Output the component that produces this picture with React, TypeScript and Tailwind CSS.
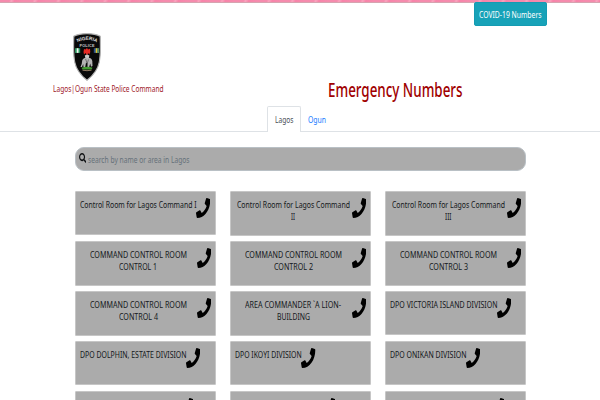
import React, { useLayoutEffect, useRef } from "react";
import { FaPhone, FaSearch } from "react-icons/fa";

/* A single line of text condensed or stretched to the given width. */
function FitText({ text, width, className = "" }: { text: string; width: number; className?: string }) {
  const ref = useRef<HTMLSpanElement>(null);
  useLayoutEffect(() => {
    const el = ref.current;
    if (!el) return;
    const fit = () => {
      el.style.transform = "none";
      el.style.transform = `scaleX(${width / el.getBoundingClientRect().width})`;
    };
    fit();
    document.fonts?.ready.then(fit);
  }, [text, width]);
  return (
    <span className={`block shrink-0 ${className}`} style={{ width }}>
      <span ref={ref} className="inline-block origin-left whitespace-nowrap">
        {text}
      </span>
    </span>
  );
}

type Line = [string, number];
type Entry = { lines: Line[] };

const entries: Entry[] = [
  { lines: [["Control Room for Lagos Command I", 116.5]] },
  { lines: [["Control Room for Lagos Command", 113], ["II", 4]] },
  { lines: [["Control Room for Lagos Command", 113], ["III", 6.5]] },
  { lines: [["COMMAND CONTROL ROOM", 97], ["CONTROL 1", 38]] },
  { lines: [["COMMAND CONTROL ROOM", 97], ["CONTROL 2", 39]] },
  { lines: [["COMMAND CONTROL ROOM", 97], ["CONTROL 3", 39]] },
  { lines: [["COMMAND CONTROL ROOM", 97], ["CONTROL 4", 39]] },
  { lines: [["AREA COMMANDER `A LION-", 96], ["BUILDING", 33]] },
  { lines: [["DPO VICTORIA ISLAND DIVISION", 107.5]] },
  { lines: [["DPO DOLPHIN, ESTATE DIVISION", 106.5]] },
  { lines: [["DPO IKOYI DIVISION", 66.7]] },
  { lines: [["DPO ONIKAN DIVISION", 76.5]] },
  { lines: [["", 99.5]] },
  { lines: [["", 86]] },
  { lines: [["", 100.5]] },
];

function Card({ entry }: { entry: Entry }) {
  const wrapped = entry.lines.length > 1;
  return (
    <div
      className={`flex items-start rounded-[1px] border border-[#c6c6c6] bg-[#ababab] pt-[6px] pl-[4px] ${
        wrapped ? "h-[44.5px]" : "h-[43.5px]"
      }`}
    >
      <div className={`flex flex-col items-center pt-px text-[9.200px] leading-[12px] text-[#14181b] ${wrapped ? "w-[117.5px]" : ""}`}>
        {entry.lines.map(([text, width], i) => (
          <FitText key={i} text={text} width={width} className="h-[12px]" />
        ))}
      </div>
      <FaPhone preserveAspectRatio="none" className="h-[20px] w-[14.3px] shrink-0 text-black" />
    </div>
  );
}

function Crest() {
  return (
    <svg viewBox="0 0 28 48" className="h-[48px] w-[28px]">
      <path d="M14 .6C9 .6 4 1.500.8 3.300.3 14 .4 22 1.700 29c1.600 8 6.300 13.500 12.300 18.300C20 42.500 24.800 37 26.300 29c1.300-7 1.400-15 .9-25.700C24 1.500 19 .6 14 .6Z" fill="#090909" stroke="#b4b4b4" strokeWidth="1.200" />
      <path id="crest-arc" d="M4.500 9.300Q14 4.300 23.500 9.300" fill="none" />
      <text fill="#e2e2e2" fontSize="4.800" fontWeight="700" fontFamily="Liberation Sans, sans-serif">
        <textPath href="#crest-arc" textLength="20" lengthAdjust="spacingAndGlyphs">NIGERIA</textPath>
      </text>
      <text x="6.500" y="13.600" textLength="15" fill="#c8c8c8" fontSize="3.800" fontWeight="700" fontFamily="Liberation Sans, sans-serif">
        POLICE
      </text>
      <path d="M2 15.200h5.200v4.700H2z" fill="#28925a" />
      <path d="M3.700 15.200h1.800v4.700H3.700z" fill="#f1f7f2" />
      <path d="M20.800 15.200h5.200v4.700h-5.200z" fill="#274e8c" />
      <path d="M22.700 15.200h1.800v4.700h-1.800z" fill="#e0c82d" />
      <path d="M24.500 15.200h1.500v4.700h-1.500z" fill="#4a8f68" />
      <path d="m11 16 1.500.5 1.500-1.500 1 1.500 2-.7.3 3.200-1 2.500-1.200-1.500-1 2.500-1.500-2.500L11 21.500l-.5-2.500Z" fill="#e52a24" />
      <path d="m11.800 22.500 2.200-1 2.400 1-.6 2.500h-3.400Z" fill="#c9c9c9" />
      <path d="M9.200 27.500c1-2.500 3-3.200 5-2.500 2-.8 4.500 0 5.100 3l.2 5-1.500.8-.8-3.300-1 3.500h-1.700v-4l-1.500-.3-.8 4.500h-1.700l-.3-3.200-1.200 3H7.500l1.200-3Z" fill="#b4b4b4" />
      <path d="m12.600 26 1.600 4.500 1.300-4" fill="none" stroke="#515151" strokeWidth=".7" />
      <path d="M8.500 34.700q5.500-2 11 0l-1 1.800h-9Z" fill="#429b31" />
      <path d="M9.500 37.200q4.500 1 9 0" stroke="#927b62" fill="none" />
    </svg>
  );
}

export default function App() {
  return (
    <div className="flex h-[400px] w-[600px] flex-col overflow-hidden bg-white font-['Noto_Sans','Open_Sans',sans-serif]">
      <div className="h-[3px] shrink-0 border-b border-[#d5a4b0] bg-[repeating-linear-gradient(110deg,#f58bad_0px,#f58bad_9px,#f9a3bd_11px,#f783a9_14px,#f58bad_22px)]" />
      <div className="flex h-[30px] shrink-0 justify-end pr-[53px]">
        <button className="-mt-px flex h-[24px] w-[73.500px] items-center justify-center rounded-[2px] border border-[#149bb2] bg-[#17a2b8] pt-[2px] text-[9.200px] leading-[12px] text-white">
          <FitText text="COVID-19 Numbers" width={62.5} className="h-[12px]" />
        </button>
      </div>
      <header className="flex h-[73px] shrink-0 items-start">
        <div className="flex w-[275px] flex-col items-start pl-[53px] text-[9.200px] leading-[12px] text-[#a0182a]">
          <div className="flex pl-[19.500px]">
            <Crest />
          </div>
          <FitText text="Lagos|Ogun State Police Command" width={110.5} className="mt-[2px] h-[12px]" />
        </div>
        <h1 className="pt-[45px] pl-[53.300px] text-[19px] leading-[24px] font-medium text-[#a00000]">
          <FitText text="Emergency Numbers" width={134.5} />
        </h1>
      </header>
      <nav className="flex h-[26px] shrink-0 border-b border-[#dee2e6] pl-[267px] text-[9.200px] leading-[12px]">
        <div className="-mb-px flex h-[26px] w-[34px] justify-center rounded-t-[2px] border border-b-0 border-[#dee2e6] bg-white pt-[7px] text-[#495057]">
          <FitText text="Lagos" width={18.5} />
        </div>
        <div className="pt-[8px] pl-[7px] text-[#167bff]">
          <FitText text="Ogun" width={18} />
        </div>
      </nav>
      <div className="mt-[15px] ml-[74.500px] flex h-[24px] w-[451.500px] shrink-0 items-center rounded-[9px] border border-[#b9c0c5] bg-[#ababab] pl-[3px] text-[9.200px] leading-[12px] text-[#66717a]">
        <FaSearch preserveAspectRatio="none" className="mb-[2px] h-[10px] w-[7.500px] text-[#101214]" />
        <FitText text="search by name or area in Lagos" width={101.5} className="mt-px ml-[2px] h-[12px]" />
      </div>
      <main className="mt-[20px] ml-[74.500px] grid w-[451.500px] auto-rows-[50.100px] grid-cols-[141.300px_141.300px_141.300px] gap-x-[13.800px]">
        {entries.map((entry, i) => (
          <Card key={i} entry={entry} />
        ))}
      </main>
    </div>
  );
}
